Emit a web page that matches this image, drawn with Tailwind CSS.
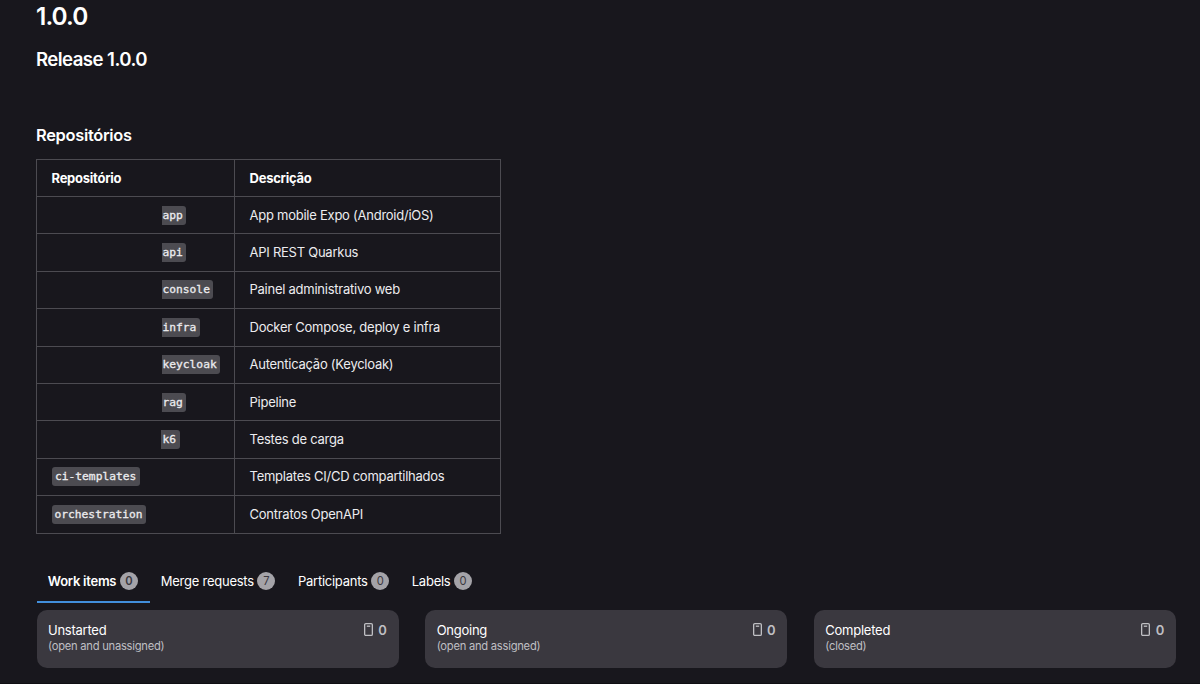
<!DOCTYPE html>
<html lang="pt-BR">
<head>
  <meta charset="UTF-8" />
  <meta name="viewport" content="width=device-width, initial-scale=1" />
  <title>1.0.0 | Milestone</title>
  <script src="https://cdn.jsdelivr.net/npm/@tailwindcss/browser@4"></script>
</head>
<body class="bg-[#18171d] text-[#ececef] font-['Inter',sans-serif] text-[13px] leading-[18px] tracking-[-0.25px] h-[684px] overflow-hidden border-b border-[#0f0e13]">

  <main class="pl-9 pr-[24px]">
    <h1 class="pt-[2px] text-[24.4px] leading-[29px] font-semibold tracking-[-0.9px] text-white">1.0.0</h1>
    <h2 class="mt-[16px] text-[18.6px] leading-[24px] font-semibold tracking-[-0.55px] text-white">Release 1.0.0</h2>
    <h3 class="mt-[53px] text-[16.4px] leading-[22px] font-semibold tracking-[-0.3px] text-white">Repositórios</h3>

    <!-- Repositories -->
    <table class="mt-[13px] w-[465px] table-fixed border-collapse text-left [&_td]:border [&_th]:border [&_td]:border-[#4c4b51] [&_th]:border-[#4c4b51] [&_td]:pl-[14.5px] [&_th]:pl-[14.5px] [&_td]:pt-0 [&_td]:pb-px [&_th]:py-0 [&_code]:inline-block [&_code]:h-[19px] [&_code]:leading-[19px] [&_code]:bg-[#4c4b51] [&_code]:font-['DejaVu_Sans_Mono',monospace] [&_code]:text-[11.25px] [&_code]:tracking-normal [&_code]:[-webkit-text-stroke:0.3px] [&_code]:align-middle">
      <colgroup>
        <col class="w-[198px]" />
        <col />
      </colgroup>
      <thead>
        <tr class="h-[37px] text-white"><th class="font-bold">Repositório</th><th class="font-bold">Descrição</th></tr>
      </thead>
      <tbody>
        <tr class="h-[37.4px]"><td><code class="ml-[110px] pl-px pr-[3.5px] rounded-r-[3px]">app</code></td><td>App mobile Expo (Android/iOS)</td></tr>
        <tr class="h-[37.4px]"><td><code class="ml-[110px] pl-px pr-[3.5px] rounded-r-[3px]">api</code></td><td>API REST Quarkus</td></tr>
        <tr class="h-[37.4px]"><td><code class="ml-[110px] pl-px pr-[3.5px] rounded-r-[3px]">console</code></td><td>Painel administrativo web</td></tr>
        <tr class="h-[37.4px]"><td><code class="ml-[110px] pl-px pr-[3.5px] rounded-r-[3px]">infra</code></td><td>Docker Compose, deploy e infra</td></tr>
        <tr class="h-[37.4px]"><td><code class="ml-[110px] pl-px pr-[3px] rounded-r-[3px]">keycloak</code></td><td>Autenticação (Keycloak)</td></tr>
        <tr class="h-[37.4px]"><td><code class="ml-[110px] pl-px pr-[3.5px] rounded-r-[3px]">rag</code></td><td>Pipeline</td></tr>
        <tr class="h-[37.4px]"><td><code class="ml-[109px] pl-[2px] pr-[3.5px] rounded-r-[3px]">k6</code></td><td>Testes de carga</td></tr>
        <tr class="h-[37.4px]"><td><code class="px-[3.5px] rounded-[3px]">ci-templates</code></td><td>Templates CI/CD compartilhados</td></tr>
        <tr class="h-[37.4px]"><td><code class="px-[3px] rounded-[3px]">orchestration</code></td><td>Contratos OpenAPI</td></tr>
      </tbody>
    </table>

    <!-- Tabs -->
    <nav class="mt-[25px] ml-[0.5px] flex h-[44px] text-white [&_a]:flex [&_a]:items-center [&_a]:gap-[3.5px] [&_a]:px-[11.3px] [&_a]:pt-px [&_span]:flex [&_span]:size-[18px] [&_span]:items-center [&_span]:justify-center [&_span]:rounded-full [&_span]:bg-[#a4a3a8] [&_span]:text-[11.2px] [&_span]:text-[#3a383f]">
      <a href="#" class="w-[113px] shadow-[inset_0_-2px_0_#428fdc] font-semibold">Work items <span>0</span></a>
      <a href="#">Merge requests <span>7</span></a>
      <a href="#">Participants <span>0</span></a>
      <a href="#">Labels <span>0</span></a>
    </nav>

    <!-- Work item columns -->
    <div class="mt-[7px] ml-[0.5px] grid grid-cols-3 gap-[26.5px]">
      <section class="flex h-[58px] justify-between rounded-[10px] bg-[#3a383f] pt-[11px] pl-[11.5px] pr-3">
        <div>
          <h4 class="text-white">Unstarted</h4>
          <p class="text-[11.2px] leading-[15px] text-[#bfbfc3]">(open and unassigned)</p>
        </div>
        <div class="flex h-[18px] items-center gap-[5.5px] font-semibold text-[#bfbfc3]">
          <svg class="h-[13px] w-[9px]" viewBox="0 0 9 13" fill="none" stroke="currentColor" stroke-width="1.3"><rect x=".65" y=".65" width="7.7" height="11.7" rx="1.2" /><path d="M2.8 3.2h3.4" /></svg>
          0
        </div>
      </section>
      <section class="flex h-[58px] justify-between rounded-[10px] bg-[#3a383f] pt-[11px] pl-[11.5px] pr-3">
        <div>
          <h4 class="text-white">Ongoing</h4>
          <p class="text-[11.2px] leading-[15px] text-[#bfbfc3]">(open and assigned)</p>
        </div>
        <div class="flex h-[18px] items-center gap-[5.5px] font-semibold text-[#bfbfc3]">
          <svg class="h-[13px] w-[9px]" viewBox="0 0 9 13" fill="none" stroke="currentColor" stroke-width="1.3"><rect x=".65" y=".65" width="7.7" height="11.7" rx="1.2" /><path d="M2.8 3.2h3.4" /></svg>
          0
        </div>
      </section>
      <section class="flex h-[58px] justify-between rounded-[10px] bg-[#3a383f] pt-[11px] pl-[11.5px] pr-3">
        <div>
          <h4 class="text-white">Completed</h4>
          <p class="text-[11.2px] leading-[15px] text-[#bfbfc3]">(closed)</p>
        </div>
        <div class="flex h-[18px] items-center gap-[5.5px] font-semibold text-[#bfbfc3]">
          <svg class="h-[13px] w-[9px]" viewBox="0 0 9 13" fill="none" stroke="currentColor" stroke-width="1.3"><rect x=".65" y=".65" width="7.7" height="11.7" rx="1.2" /><path d="M2.8 3.2h3.4" /></svg>
          0
        </div>
      </section>
    </div>
  </main>

</body>
</html>
